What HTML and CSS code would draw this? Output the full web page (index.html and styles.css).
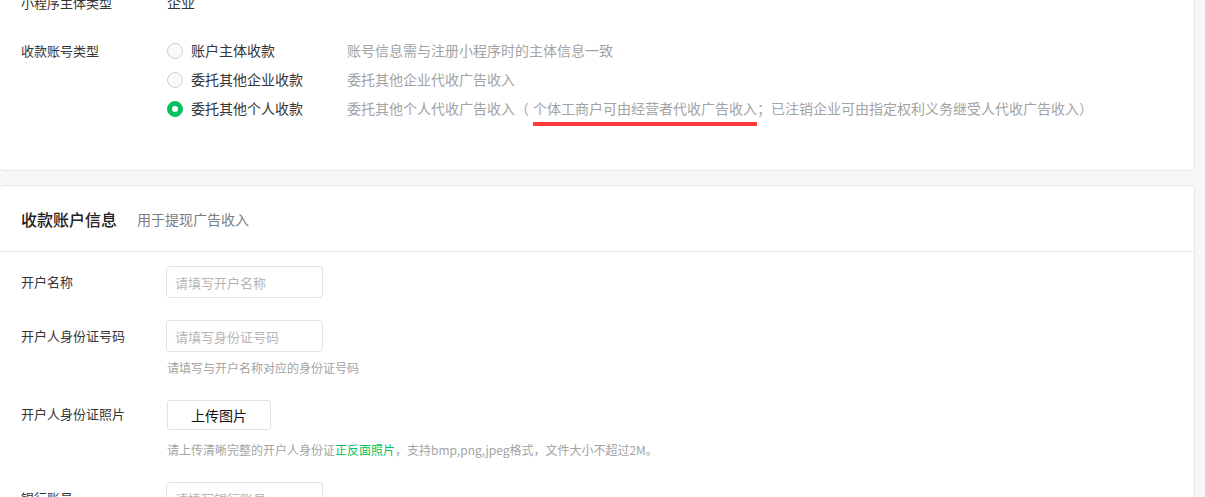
FILE: index.html
```html
<!DOCTYPE html>
<html lang="zh-CN">

<head>
  <meta charset="UTF-8">
  <meta name="viewport" content="width=device-width, initial-scale=1.0">
  <title>收款设置</title>
  <link rel="stylesheet" href="styles.css">
</head>

<body>
  <div class="page">
    <div class="card card--type">
      <div class="row">
        <div class="row__label">小程序主体类型</div>
        <div class="row__value">企业</div>
      </div>
      <div class="row">
        <div class="row__label">收款账号类型</div>
        <div class="options">
          <div class="option">
            <span class="radio"></span>
            <span class="option__name">账户主体收款</span>
            <span class="option__desc">账号信息需与注册小程序时的主体信息一致</span>
          </div>
          <div class="option">
            <span class="radio"></span>
            <span class="option__name">委托其他企业收款</span>
            <span class="option__desc">委托其他企业代收广告收入</span>
          </div>
          <div class="option">
            <span class="radio radio--checked"></span>
            <span class="option__name">委托其他个人收款</span>
            <span class="option__desc">委托其他个人代收广告收入（<span class="mark">个体工商户可由经营者代收广告收入</span>；已注销企业可由指定权利义务继受人代收广告收入）</span>
          </div>
        </div>
      </div>
    </div>

    <div class="card">
      <div class="card__head">
        <h2 class="card__title">收款账户信息</h2>
        <span class="card__sub">用于提现广告收入</span>
      </div>
      <div class="form">
        <div class="field">
          <div class="field__label">开户名称</div>
          <div class="field__body">
            <input class="input" type="text" placeholder="请填写开户名称">
          </div>
        </div>
        <div class="field">
          <div class="field__label">开户人身份证号码</div>
          <div class="field__body">
            <input class="input" type="text" placeholder="请填写身份证号码">
            <p class="hint">请填写与开户名称对应的身份证号码</p>
          </div>
        </div>
        <div class="field">
          <div class="field__label field__label--btn">开户人身份证照片</div>
          <div class="field__body">
            <button class="btn">上传图片</button>
            <p class="hint hint--btn">请上传清晰完整的开户人身份证<span class="green">正反面照片</span>，支持bmp,png,jpeg格式，文件大小不超过2M。</p>
          </div>
        </div>
        <div class="field">
          <div class="field__label">银行账号</div>
          <div class="field__body">
            <input class="input" type="text" placeholder="请填写银行账号">
          </div>
        </div>
      </div>
    </div>
  </div>
</body>

</html>
```

FILE: styles.css
```css
* {
  box-sizing: border-box;
}

body {
  margin: 0;
  background: #f6f7f9;
  font-family: "Noto Sans CJK SC", "Liberation Sans", sans-serif;
  color: #353535;
  overflow: hidden;
}

.page {
  margin: -37px 10px 0 -1px;
}

.card {
  background: #fff;
  border: 1px solid #e6e7eb;
  border-radius: 4px;
  margin-bottom: 14px;
}

.card--type {
  padding: 24px 0 47px 21px;
}

.row {
  display: flex;
  font-size: 13px;
  line-height: 29px;
  margin-bottom: 19px;
}

.row:last-child {
  margin-bottom: 0;
}

.row__label {
  width: 146px;
  flex: none;
}

.row__value {
  font-size: 14px;
}

.option {
  display: flex;
  align-items: center;
  height: 29px;
  font-size: 14px;
}

.radio {
  width: 16px;
  height: 16px;
  border: 1px solid #cfcfcf;
  border-radius: 50%;
  background: #fafafa;
  margin-right: 8px;
  flex: none;
  display: flex;
  align-items: center;
  justify-content: center;
}

.radio--checked {
  background: #07c160;
  border-color: #07c160;
}

.radio--checked::after {
  content: "";
  width: 6px;
  height: 6px;
  border-radius: 50%;
  background: #fff;
}

.option__name {
  width: 156px;
  flex: none;
}

.option__desc {
  color: #a3a3a3;
  white-space: nowrap;
}

.mark {
  position: relative;
  margin-left: 4px;
}

.mark::after {
  content: "";
  position: absolute;
  left: 0;
  right: 0;
  top: 24px;
  height: 4px;
  background: #fa3a3a;
}

.card__head {
  display: flex;
  align-items: center;
  height: 66px;
  padding-left: 21px;
  border-bottom: 1px solid #e8e8ec;
}

.card__title {
  margin: 0 20px 0 0;
  font-size: 16px;
  font-weight: 500;
  color: #222;
}

.card__sub {
  font-size: 14px;
  color: #7d7d7d;
}

.form {
  padding: 14px 0 0 21px;
}

.field {
  display: flex;
  margin-bottom: 22px;
}

.field__label {
  width: 145px;
  flex: none;
  font-size: 13px;
  line-height: 32px;
}

.field__label--btn {
  line-height: 28px;
}

.input {
  display: block;
  width: 157px;
  height: 32px;
  border: 1px solid #e2e2e2;
  border-radius: 4px;
  padding: 0 8px;
  font: inherit;
  font-size: 13px;
  color: #353535;
  outline: none;
}

.input::placeholder {
  color: #b5b5b5;
}

.btn {
  display: block;
  width: 104px;
  height: 30px;
  margin-left: 1px;
  border: 1px solid #e2e2e2;
  border-radius: 3px;
  background: #fff;
  font: inherit;
  font-size: 14px;
  color: #111;
}

.hint {
  margin: 6px 0 0 1px;
  font-size: 12px;
  line-height: 20px;
  color: #a3a3a3;
}

.hint--btn {
  margin-top: 10px;
}

.green {
  color: #07c160;
}
```
